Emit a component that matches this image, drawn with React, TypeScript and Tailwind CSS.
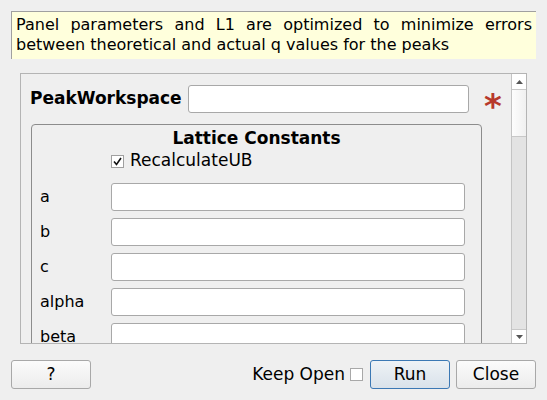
export default function App() {
  const rows = ["a", "b", "c", "alpha", "beta"];

  return (
    <div className="w-[547px] h-[400px] bg-[#efefef] font-['DejaVu_Sans',sans-serif] text-[16px] text-black overflow-hidden flex flex-col">
      <div className="mx-[11px] mt-[11px] h-[48px] bg-[#ffffdc] border-t border-l border-[#a0a0a0] px-[4px] pt-[3px] leading-[20px] text-justify [text-align-last:left]">
        Panel parameters and L1 are optimized to minimize errors between theoretical and actual q values for the peaks
      </div>

      <div className="ml-[20px] mt-[14px] w-[507px] h-[271px] border border-[#b4b4b4] flex">
        <div className="flex-1 overflow-hidden">
          <div className="flex items-center h-[28px] mt-[11px]">
            <span className="ml-[9px] font-bold text-[17px] w-[158px]">PeakWorkspace</span>
            <div className="w-[281px] h-[28px] bg-white border border-[#a8a8a8] rounded-[3px]" />
            <span className="ml-[15px] text-[#b7392b] font-bold text-[34px] leading-none mt-[14px]">*</span>
          </div>

          <div className="ml-[10px] mt-[11px] w-[451px] h-[240px] border border-[#8c8c8c] rounded-[4px]">
            <div className="text-center font-bold text-[17px] leading-[20px] mt-[3px]">Lattice Constants</div>
            <div className="flex items-center mt-[3px] ml-[79px] h-[20px]">
              <div className="w-[13px] h-[13px] bg-white border border-[#a0a0a0] flex items-center justify-center">
                <svg width="9" height="9" viewBox="0 0 9 9">
                  <path d="M1 4.5 L3.5 7.5 L8 1" stroke="#111" strokeWidth="1.6" fill="none" />
                </svg>
              </div>
              <span className="ml-[6px] text-[17px]">RecalculateUB</span>
            </div>
            <div className="flex flex-col gap-[7px] mt-[12px]">
              {rows.map((r) => (
                <div key={r} className="flex items-center h-[28px]">
                  <span className="ml-[8px] w-[71px]">{r}</span>
                  <div className="w-[354px] h-[28px] bg-white border border-[#a8a8a8] rounded-[3px]" />
                </div>
              ))}
            </div>
          </div>
        </div>

        <div className="w-[15px] h-full border-l border-[#c4c4c4] flex flex-col bg-[#e3e3e3]">
          <div className="h-[16px] bg-white border-b border-[#c8c8c8] flex items-center justify-center">
            <svg width="7" height="4" viewBox="0 0 7 4">
              <path d="M0 4 L3.5 0 L7 4 Z" fill="#555" />
            </svg>
          </div>
          <div className="h-[47px] bg-gradient-to-r from-[#fdfdfd] to-[#f0f0f0] border-b border-[#c8c8c8]" />
          <div className="flex-1" />
          <div className="h-[14px] bg-white border-t border-[#c8c8c8] flex items-center justify-center">
            <svg width="7" height="4" viewBox="0 0 7 4">
              <path d="M0 0 L7 0 L3.5 4 Z" fill="#555" />
            </svg>
          </div>
        </div>
      </div>

      <div className="flex items-center mt-[16px] px-[11px] h-[29px] text-[17px]">
        <button className="w-[80px] h-[29px] border border-[#a8a8a8] rounded-[3px] bg-gradient-to-b from-[#fbfbfb] to-[#ececec]">?</button>
        <div className="flex-1" />
        <span>Keep Open</span>
        <div className="ml-[5px] w-[13px] h-[13px] bg-white border border-[#a8a8a8]" />
        <button className="ml-[7px] w-[80px] h-[29px] border border-[#3b78b4] rounded-[3px] bg-gradient-to-b from-[#eef2f6] to-[#d9e2ea]">Run</button>
        <button className="ml-[6px] w-[80px] h-[29px] border border-[#a8a8a8] rounded-[3px] bg-gradient-to-b from-[#fbfbfb] to-[#ececec]">Close</button>
      </div>
    </div>
  );
}
